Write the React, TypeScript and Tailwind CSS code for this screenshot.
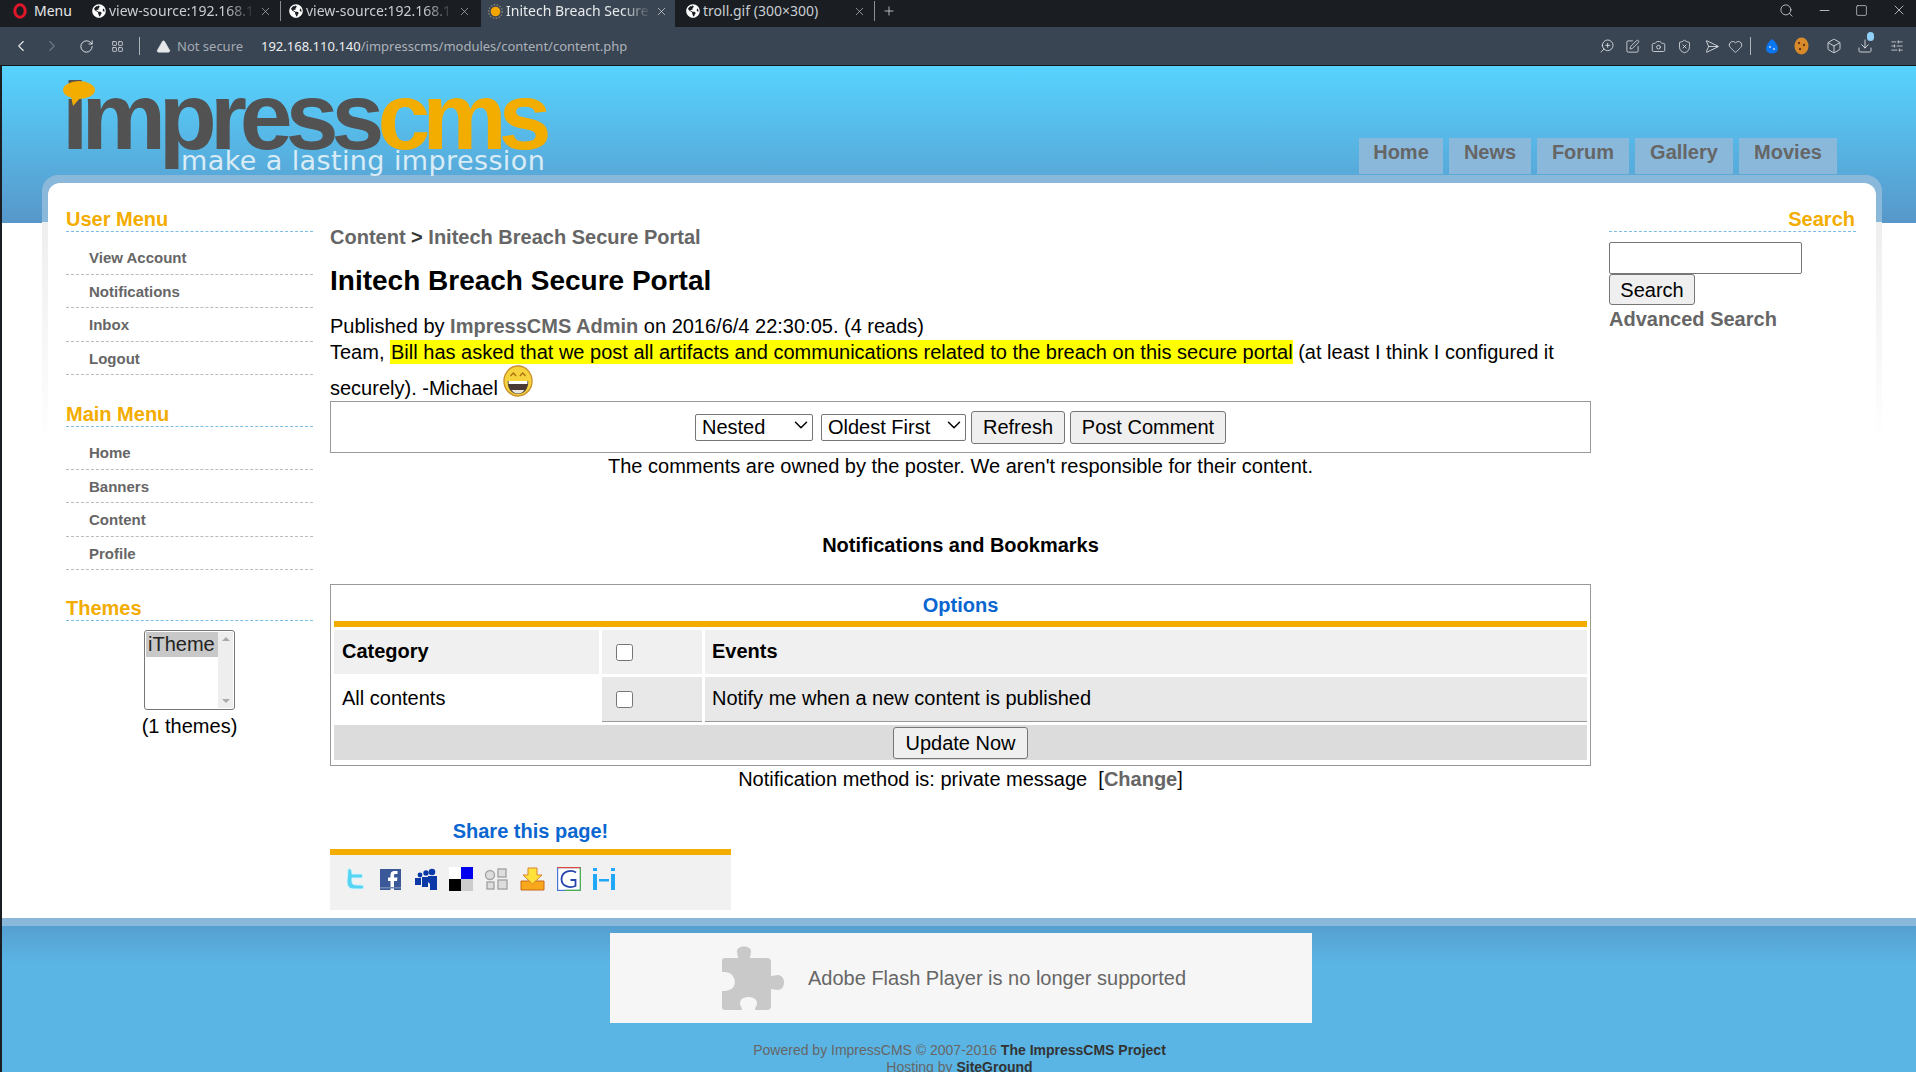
import {
  Box, Camera, ChevronDown, ChevronLeft, ChevronRight, Download, Heart, LayoutGrid, Minus, Plus, RotateCw, Search, Send,
  ShieldX, SlidersHorizontal, Square, SquarePen, TriangleAlert, X, ZoomIn,
} from 'lucide-react';
import { FaGlobeAmericas } from 'react-icons/fa';

const userMenu = ['View Account', 'Notifications', 'Inbox', 'Logout'];
const mainMenu = ['Home', 'Banners', 'Content', 'Profile'];
const navTabs = [
  { label: 'Home', cls: 'w-[84px]' },
  { label: 'News', cls: 'w-[82px]' },
  { label: 'Forum', cls: 'w-[92px]' },
  { label: 'Gallery', cls: 'w-[98px]' },
  { label: 'Movies', cls: 'w-[98px]' },
];

function SourceTab({ title, width, sep }: { title: string; width: string; sep?: boolean }) {
  return (
    <div className={`flex items-center pr-[8px] ${width} ${sep ? 'border-r border-[#8a9097] h-[20px]' : 'h-[27px]'}`}>
      <FaGlobeAmericas className="text-white shrink-0" size={14} />
      <span className="ml-[3px] flex-1 overflow-hidden whitespace-nowrap text-[#c9ced3] [mask-image:linear-gradient(to_right,black_80%,transparent)]">{title}</span>
      <X size={13} strokeWidth={1.2} className="text-[#c5c9cd] ml-[4px] shrink-0" />
    </div>
  );
}

function BrowserChrome() {
  return (
    <div className="font-['Noto_Sans',sans-serif]">
      <div className="h-[27px] bg-[#1a1e22] flex items-start text-[14px] leading-none">
        <div className="flex items-center h-[22px] w-[92px] pl-[13px] text-[#e6e8ea]">
          <svg width="14" height="16" viewBox="0 0 14 16" className="shrink-0">
            <ellipse cx="7" cy="8" rx="5.2" ry="6.2" fill="none" stroke="#e0162b" strokeWidth="3" />
          </svg>
          <span className="ml-[7px]">Menu</span>
        </div>
        <div className="h-[22px] flex items-center">
          <SourceTab title="view-source:192.168.1" width="w-[189px]" sep />
        </div>
        <div className="w-[8px]" />
        <div className="h-[22px] flex items-center">
          <SourceTab title="view-source:192.168.1" width="w-[192px] pr-[10px]" />
        </div>
        <div className="h-[27px] w-[194px] bg-[#3a4553] flex items-center pl-[7px] pr-[7px] pb-[5px] text-[#e8eaec]">
          <svg width="15" height="15" viewBox="0 0 15 15" className="shrink-0">
            <circle cx="7.5" cy="7.5" r="6.8" fill="none" stroke="#8d8d80" strokeWidth="1.2" strokeDasharray="1.5 1.5" />
            <circle cx="7.5" cy="7.5" r="4.8" fill="#f3a500" />
          </svg>
          <span className="ml-[3px] flex-1 overflow-hidden whitespace-nowrap [mask-image:linear-gradient(to_right,black_80%,transparent)]">Initech Breach Secure Portal</span>
          <X size={13} strokeWidth={1.2} className="ml-[4px] shrink-0" />
        </div>
        <div className="flex items-center h-[20px] mt-px w-[200px] pl-[11px] pr-[8px] border-r border-[#8a9097] text-[#c9ced3]">
          <FaGlobeAmericas className="text-white shrink-0" size={14} />
          <span className="ml-[3px] flex-1 whitespace-nowrap">troll.gif (300×300)</span>
          <X size={13} strokeWidth={1.2} className="shrink-0" />
        </div>
        <Plus size={14} strokeWidth={1.3} className="text-[#dfe2e5] ml-[7px] mt-[4px]" />
        <div className="flex-1" />
        <div className="flex items-center h-[20px] gap-[23px] pr-[9px] text-[#d4d7da]">
          <Search size={15} strokeWidth={1.3} />
          <Minus size={15} strokeWidth={1.3} />
          <Square size={13} strokeWidth={1.3} />
          <X size={16} strokeWidth={1.2} />
        </div>
      </div>
      <div className="h-[39px] bg-[#3a4553] border-b border-[#14181c] flex items-center text-[13px] leading-none">
        <ChevronLeft size={18} strokeWidth={1.5} className="text-[#e5e7e9] ml-[12px]" />
        <ChevronRight size={18} strokeWidth={1.5} className="text-[#6d7783] ml-[13px]" />
        <RotateCw size={15} strokeWidth={1.5} className="text-[#e5e7e9] ml-[18px]" />
        <LayoutGrid size={13} strokeWidth={1.4} className="text-[#e5e7e9] ml-[17px]" />
        <div className="w-px h-[18px] bg-[#aeb4ba] ml-[15px]" />
        <TriangleAlert size={15} fill="#e5e7e9" strokeWidth={1} className="text-[#e5e7e9] ml-[16px]" />
        <span className="text-[#a3abb3] ml-[6px] w-[84px]">Not secure</span>
        <span className="text-[#eceef0]">192.168.110.140</span>
        <span className="text-[#aab2ba]">/impresscms/modules/content/content.php</span>
        <div className="flex-1" />
        <div className="flex items-center text-[#dfe2e5] pr-[12px]">
          <ZoomIn size={16} strokeWidth={1.3} className="-scale-x-100" />
          <SquarePen size={15} strokeWidth={1.3} className="ml-[10px]" />
          <Camera size={15} strokeWidth={1.3} className="ml-[11px]" />
          <ShieldX size={15} strokeWidth={1.3} className="ml-[11px]" />
          <Send size={15} strokeWidth={1.3} className="ml-[10px] rotate-45" />
          <Heart size={15} strokeWidth={1.3} className="ml-[11px]" />
          <div className="w-px h-[18px] bg-[#aeb4ba] ml-[7px]" />
          <svg width="14" height="16" viewBox="0 0 14 16" className="ml-[14px]">
            <path d="M7 1 C3 4 1 8 1 11 a6 4.5 0 0 0 12 0 C13 8 11 4 7 1Z" fill="#0a76f0" />
            <circle cx="5" cy="9" r="1" fill="#bcdcff" />
            <circle cx="9" cy="11" r="1" fill="#bcdcff" />
          </svg>
          <svg width="15" height="18" viewBox="0 0 15 18" className="ml-[15px]">
            <ellipse cx="7.5" cy="9" rx="7" ry="8.5" fill="#d98a2b" />
            <circle cx="5" cy="6" r="1.2" fill="#6a3a10" />
            <circle cx="10" cy="8" r="1.2" fill="#6a3a10" />
            <circle cx="6" cy="12" r="1.2" fill="#6a3a10" />
          </svg>
          <Box size={16} strokeWidth={1.3} className="ml-[17px]" />
          <div className="relative ml-[15px]">
            <Download size={16} strokeWidth={1.3} />
            <span className="absolute -top-[6px] left-[10px] w-[7px] h-[9px] rounded-full bg-[#8fd0f7]" />
          </div>
          <SlidersHorizontal size={14} strokeWidth={1.3} className="ml-[17px]" />
        </div>
      </div>
    </div>
  );
}

function Logo() {
  return (
    <div className="relative ml-[60px] pt-[14px] w-[500px] font-['Liberation_Sans',sans-serif]">
      <div className="flex text-[95px] leading-[72px] h-[72px] font-bold whitespace-nowrap">
        <span className="text-[#525252] tracking-[-7px]">impress</span>
        <span className="text-[#f3ac00] tracking-[-8px]">cms</span>
      </div>
      <div className="ml-[119px] -mt-[3px] text-[#d9ecf6] text-[27px] leading-[24px] font-['DejaVu_Sans',sans-serif] tracking-[0.4px] whitespace-nowrap">
        make a lasting impression
      </div>
      <svg width="36" height="28" viewBox="0 0 36 28" className="absolute left-0 top-[14px]">
        <ellipse cx="17" cy="10" rx="16" ry="9" fill="#f3ac00" />
        <path d="M9 16 L11 26 L19 17Z" fill="#f3ac00" />
      </svg>
    </div>
  );
}

function BlockTitle({ children, right }: { children: string; right?: boolean }) {
  return (
    <div className={`h-[34px] border-b border-dashed border-[#7dbce2] text-[20px] leading-[42px] font-bold text-[#f3ac00] ${right ? 'text-right pr-px' : ''}`}>
      {children}
    </div>
  );
}

function SideMenu({ items, top }: { items: string[]; top: string }) {
  return (
    <ul className={top}>
      {items.map((item) => (
        <li key={item} className="h-[33.5px] border-b border-dashed border-[#bbbbbb] pl-[23px] pt-[7px] text-[15px] leading-[20px] font-bold text-[#666666]">
          {item}
        </li>
      ))}
    </ul>
  );
}

function ThemeList() {
  return (
    <div className="flex flex-col items-center">
      <div className="mt-[9px] w-[91px] h-[80px] border border-[#767676] rounded-[3px] flex p-px bg-white">
        <div className="flex-1">
          <div className="h-[25px] bg-[#c8c8c8] pl-[2px] text-[20px] leading-[24px] text-[#222]">iTheme</div>
        </div>
        <div className="w-[15px] bg-[#eeeeee] flex flex-col justify-between items-center py-[5px]">
          <span className="w-0 h-0 border-x-[4px] border-x-transparent border-b-[4px] border-b-[#aaaaaa]" />
          <span className="w-0 h-0 border-x-[4px] border-x-transparent border-t-[4px] border-t-[#aaaaaa]" />
        </div>
      </div>
      <div className="mt-[4px] text-[20px] leading-[24px] text-black">(1 themes)</div>
    </div>
  );
}

function Smiley() {
  return (
    <svg width="30" height="32" viewBox="0 0 32 32" preserveAspectRatio="none" className="inline-block align-[-2px]">
      <circle cx="16" cy="16" r="15" fill="#f6d33c" stroke="#c9902a" strokeWidth="1.4" />
      <path d="M8 11 l3 -3 l3 3 M18 11 l3 -3 l3 3" fill="none" stroke="#a86f10" strokeWidth="1.4" />
      <path d="M5 16 H27 C27 25 22 29 16 29 C10 29 5 25 5 16Z" fill="#4a3a36" />
      <path d="M6 16 H26 V19 H6Z" fill="#ffffff" />
      <path d="M9 25 H23 C21 27.5 19 28.5 16 28.5 C13 28.5 11 27.5 9 25Z" fill="#e9e4dc" />
    </svg>
  );
}

const btnCls = 'bg-[#efefef] border border-[#767676] rounded-[3px] text-[20px] leading-[24px] text-black';

function NativeSelect({ label, width }: { label: string; width: string }) {
  return (
    <div className={`relative ${width}`}>
      <select className="appearance-none w-full h-[27px] bg-white border border-[#767676] rounded-[2px] text-[20px] leading-[24px] text-black pl-[6px]" defaultValue={label}>
        <option>{label}</option>
      </select>
      <ChevronDown size={22} strokeWidth={1.6} className="absolute right-[1px] top-[2px] text-black pointer-events-none" />
    </div>
  );
}

function ShareIcons() {
  return (
    <div className="flex items-center gap-[11.3px] pl-[13px] pb-[8px] h-[55px] bg-[#f1f1f1]">
      {/* twitter */}
      <svg width="24" height="24" viewBox="0 0 24 24">
        <path d="M5 2 C8 1 9 3 9 7 H18 C20 7 20 11 18 11 H9 V15 C9 18 12 18 19 18 C21 18 21 22 19 22 H11 C6 22 4 19 4 14Z" fill="#55d4f4" stroke="#d4f4fc" />
      </svg>
      {/* facebook */}
      <svg width="24" height="24" viewBox="0 0 24 24">
        <rect x="2" y="2" width="21" height="21" fill="#3b5998" />
        <path d="M16 23 V14 H19 L19.5 10.5 H16 V8.5 C16 7.3 16.6 7 17.6 7 H19.5 V4 H16.5 C13.8 4 12.5 5.6 12.5 8 V10.5 H10 V14 H12.5 V23Z" fill="#ffffff" />
        <rect x="2" y="20" width="21" height="1.5" fill="#7186b5" />
      </svg>
      {/* myspace */}
      <svg width="24" height="24" viewBox="0 0 24 24">
        <circle cx="18" cy="5" r="3.3" fill="#0b3aa8" />
        <circle cx="12" cy="6" r="2.7" fill="#0b3aa8" />
        <circle cx="6" cy="8" r="2.4" fill="#0b3aa8" />
        <path d="M14 9 H23 V23 H16 V17 L14 15Z M8 10 H14 V20 H8Z M1 11 H7 V18 H1Z" fill="#0b3aa8" />
      </svg>
      {/* delicious */}
      <svg width="24" height="24" viewBox="0 0 24 24">
        <rect width="12" height="12" fill="#ffffff" />
        <rect x="12" width="12" height="12" fill="#0000ee" />
        <rect y="12" width="12" height="12" fill="#000000" />
        <rect x="12" y="12" width="12" height="12" fill="#cccccc" />
      </svg>
      {/* digg style */}
      <svg width="25" height="24" viewBox="0 0 25 24">
        <g fill="#dddddd" stroke="#a5a5a5" strokeWidth="1.4">
          <circle cx="6" cy="8" r="4.5" />
          <rect x="14" y="2" width="8" height="8" />
          <rect x="3" y="15" width="7" height="7" />
          <rect x="14" y="13" width="9" height="9" />
        </g>
      </svg>
      {/* download */}
      <svg width="25" height="24" viewBox="0 0 25 24">
        <path d="M1 14 H24 V23 H1Z" fill="#f8a81a" stroke="#c8691a" />
        <path d="M8 1 H17 V8 H22 L12.5 17 L3 8 H8Z" fill="#ffe23a" stroke="#d9822a" />
      </svg>
      {/* google */}
      <svg width="24" height="24" viewBox="0 0 24 24">
        <rect x="0.6" y="0.6" width="22.8" height="22.8" fill="#ffffff" stroke="#4a78d8" strokeWidth="1.2" />
        <path d="M23.4 0.6 V23.4 H8" fill="none" stroke="#4fae4f" strokeWidth="1.2" />
        <path d="M0.6 0.6 H23.4" stroke="#d94a3a" strokeWidth="1.2" />
        <path d="M19 5.5 C15 2.5 5 3.5 4.5 12 C4.5 20.5 14 21 18.5 19 V13 H13.5" fill="none" stroke="#2644ac" strokeWidth="1.8" />
      </svg>
      {/* hi */}
      <svg width="24" height="24" viewBox="0 0 24 24">
        <g fill="#20a8f8">
          <rect x="1" y="7" width="4" height="16" />
          <rect x="1" y="1" width="4" height="3" />
          <rect x="19" y="7" width="4" height="16" />
          <rect x="19" y="1" width="4" height="3" />
          <rect x="7" y="12" width="10" height="2.5" />
        </g>
      </svg>
    </div>
  );
}

export default function App() {
  return (
    <div className="h-[1072px] overflow-hidden bg-[#1a1e22] font-['Liberation_Sans',sans-serif]">
      <BrowserChrome />
      <div className="ml-[2px] bg-white bg-[linear-gradient(#57d3ff,#5797c9)] bg-no-repeat bg-[length:100%_157px]">
        {/* header */}
        <div className="h-[109px] flex justify-between">
          <Logo />
          <div className="flex items-end gap-[6px] pr-[79px] pb-px">
            {navTabs.map((t) => (
              <div key={t.label} className={`h-[36px] bg-[#8ab8db] text-center text-[20px] leading-[28px] font-bold text-[#666666] ${t.cls}`}>
                {t.label}
              </div>
            ))}
          </div>
        </div>

        {/* panel */}
        <div className="ml-[40px] mr-[34px] px-[6px] pt-[8px] rounded-t-[16px] bg-[linear-gradient(#8ab8db,#8ab8db_47px,#eeeeee_47px,#ffffff_270px)]">
          <div className="bg-white rounded-t-[12px] h-[735px] flex pl-[18px] pr-[20px]">
            {/* left column */}
            <aside className="w-[247px] shrink-0 pt-[15px]">
              <BlockTitle>User Menu</BlockTitle>
              <SideMenu items={userMenu} top="mt-[9px]" />
              <div className="mt-[18px]"><BlockTitle>Main Menu</BlockTitle></div>
              <SideMenu items={mainMenu} top="mt-[9px]" />
              <div className="mt-[17px]"><BlockTitle>Themes</BlockTitle></div>
              <ThemeList />
            </aside>

            {/* center column */}
            <main className="w-[1261px] shrink-0 ml-[17px] mr-[18px] pt-[42px] text-[20px] text-black">
              <div className="h-[25px] leading-[25px] font-bold text-[#666666]">
                Content <span className="text-[#333333]">&gt;</span> Initech Breach Secure Portal
              </div>
              <h1 className="mt-[14px] text-[28px] leading-[34px] font-bold">Initech Breach Secure Portal</h1>
              <div className="mt-[15px] leading-[26px]">
                Published by <span className="font-bold text-[#666666]">ImpressCMS Admin</span> on 2016/6/4 22:30:05. (4 reads)
              </div>
              <div className="leading-[26px]">
                Team, <mark className="bg-[#ffff00] text-black pl-px py-px">Bill has asked that we post all artifacts and communications related to the breach on this secure portal</mark> (at least I think I configured it
                securely). -Michael <Smiley />
              </div>
              <div className="h-[52px] border border-[#999999] flex items-center justify-center gap-[5px]">
                <div className="mr-[3px]"><NativeSelect label="Nested" width="w-[118px]" /></div>
                <NativeSelect label="Oldest First" width="w-[145px]" />
                <button className={`${btnCls} w-[94px] h-[33px]`}>Refresh</button>
                <button className={`${btnCls} w-[156px] h-[33px]`}>Post Comment</button>
              </div>
              <p className="text-center leading-[26px]">The comments are owned by the poster. We aren't responsible for their content.</p>
              <p className="mt-[53px] text-center font-bold leading-[26px]">Notifications and Bookmarks</p>

              <div className="mt-[26px] border border-[#999999] px-[3px] pb-[3px] h-[182px]">
                <div className="h-[36px] text-center font-bold leading-[40px] text-[#0a66d0]">Options</div>
                <div className="h-[6px] bg-[#f3ac00]" />
                <div className="mt-[3px] flex gap-[3px] h-[44px] font-bold leading-[42px]">
                  <div className="w-[265px] bg-[#f0f0f0] pl-[8px]">Category</div>
                  <div className="w-[100px] bg-[#f0f0f0] pl-[14px] flex items-center">
                    <input type="checkbox" className="w-[17px] h-[17px] m-0" />
                  </div>
                  <div className="flex-1 bg-[#f0f0f0] pl-[7px]">Events</div>
                </div>
                <div className="mt-[3px] flex gap-[3px] h-[45px] leading-[42px]">
                  <div className="w-[265px] pl-[8px]">All contents</div>
                  <div className="w-[100px] bg-[#e8e8e8] border-b border-[#999999] pl-[14px] flex items-center">
                    <input type="checkbox" className="w-[17px] h-[17px] m-0" />
                  </div>
                  <div className="flex-1 bg-[#e8e8e8] border-b border-[#999999] pl-[7px]">Notify me when a new content is published</div>
                </div>
                <div className="mt-[3px] h-[35px] bg-[#dcdcdc] flex items-center justify-center">
                  <button className={`${btnCls} w-[135px] h-[32px]`}>Update Now</button>
                </div>
              </div>
              <p className="text-center leading-[26px]">
                Notification method is: private message&nbsp; [<span className="font-bold text-[#666666]">Change</span>]
              </p>

              <div className="mt-[26px] w-[401px]">
                <div className="h-[26px] text-center font-bold leading-[26px] text-[#0a66d0]">Share this page!</div>
                <div className="mt-[5px] h-[6px] bg-[#f3ac00]" />
                <ShareIcons />
              </div>
            </main>

            {/* right column */}
            <aside className="flex-1 pt-[15px]">
              <BlockTitle right>Search</BlockTitle>
              <input type="text" className="block mt-[10px] w-[193px] h-[32px] border border-[#767676] rounded-[2px] bg-white" />
              <button className={`${btnCls} block w-[86px] h-[31px]`}>Search</button>
              <div className="mt-px text-[20px] leading-[26px] font-bold text-[#666666]">Advanced Search</div>
            </aside>
          </div>
        </div>

        {/* footer */}
        <div className="h-[8px] bg-[#8ab8db]" />
        <div className="h-[146px] bg-[#5ab5e4] bg-[linear-gradient(#569fd0,#5ab5e4)] bg-no-repeat bg-[length:100%_38px] pt-[7px]">
          <div className="ml-[608px] w-[702px] h-[90px] bg-[#f6f6f6] flex items-center pl-[112px]">
            <svg width="64" height="64" viewBox="0 0 64 64" className="shrink-0">
              <path
                d="M0 15 a3 3 0 0 1 3 -3 H16 C16 9 15 8 15 5 C15 -1 29 -1 29 5 C29 8 28 9 28 12 H45 a4 4 0 0 1 4 4 V30 C52 30 53 29 56 29 C64 29 64 44 56 44 C53 44 52 43 49 43 V60 a4 4 0 0 1 -4 4 H33 C33 61 35 60 35 57 C35 49 18 49 18 57 C18 60 20 61 20 64 H3 a3 3 0 0 1 -3 -3 V45 C3 45 9 45 12 40 C14 36 12 30 9 28 C6 26 3 26 0 26 Z"
                fill="#c9c9c9"
              />
            </svg>
            <span className="ml-[22px] text-[20px] text-[#666666] whitespace-nowrap">Adobe Flash Player is no longer supported</span>
          </div>
          <div className="mt-[19px] ml-[1px] text-center text-[14px] leading-[17px] text-[#666666]">
            <div>Powered by ImpressCMS © 2007-2016 <span className="font-bold text-[#333333]">The ImpressCMS Project</span></div>
            <div>Hosting by <span className="font-bold text-[#333333]">SiteGround</span></div>
          </div>
        </div>
      </div>
    </div>
  );
}
